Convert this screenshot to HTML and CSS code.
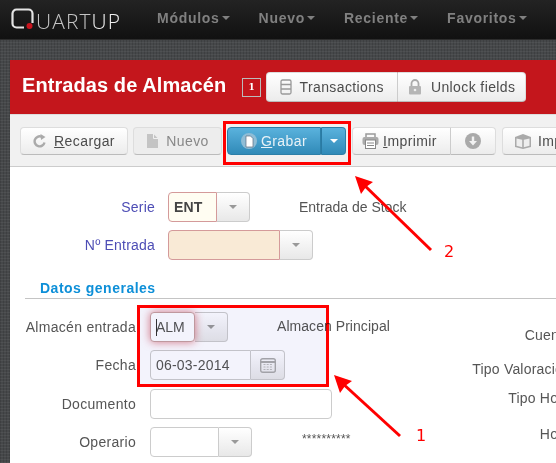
FILE: index.html
```html
<!DOCTYPE html>
<html lang="es">
<head>
<meta charset="utf-8">
<title>Entradas de Almacén</title>
<link rel="stylesheet" href="styles.css">
</head>
<body>
<nav class="navbar">
  <a class="brand">
    <svg class="brand-q" width="24" height="22" viewBox="0 0 24 22"><path d="M13 19.500H5.500A4 4 0 0 1 1.500 15.500V5.500A4 4 0 0 1 5.500 1.500h12A4 4 0 0 1 21.500 5.500V15" fill="none" stroke="#e4e4e4" stroke-width="2.200"/><circle cx="18.500" cy="18" r="3" fill="#c8141e"/></svg>
    <span class="brand-a">UART</span><span class="brand-b">UP</span>
  </a>
  <ul class="menu">
    <li>Módulos<i class="caret"></i></li>
    <li>Nuevo<i class="caret"></i></li>
    <li>Reciente<i class="caret"></i></li>
    <li>Favoritos<i class="caret"></i></li>
  </ul>
</nav>
<main class="page">
  <section class="panel">
    <header class="panel-head">
      <h1>Entradas de Almacén</h1>
      <span class="count">1</span>
      <div class="btn-group head-group">
        <button class="btn wide-t"><svg width="12" height="16" viewBox="0 0 12 16"><rect x="1" y="1" width="10" height="14" rx="1.500" fill="none" stroke="#999" stroke-width="1.300"/><path d="M1 5.500h10M1 10h10" stroke="#999" stroke-width="1.300"/></svg>Transactions</button>
        <button class="btn wide-u"><svg width="14" height="16" viewBox="0 0 14 16"><path d="M3.500 7V4.500a3.500 3.500 0 0 1 7 0V7" fill="none" stroke="#aaa" stroke-width="1.800"/><rect x="1" y="7" width="12" height="8.500" rx="1" fill="#b5b5b5"/><circle cx="7" cy="11" r="1.300" fill="#eee"/></svg>Unlock fields</button>
      </div>
    </header>
    <div class="toolbar">
      <button class="btn b-reload"><svg width="14" height="14" viewBox="0 0 14 14"><path d="M11.500 8.500A5 5 0 1 1 8.500 2.700" fill="none" stroke="#aaa" stroke-width="2.400"/><path d="M7.500 0l5 3-4.500 3z" fill="#aaa"/></svg><span><u>R</u>ecargar</span></button>
      <button class="btn b-new"><svg width="12" height="14" viewBox="0 0 12 14"><path d="M1 0h6.500L12 4.500V14H1z" fill="#c4c4c4"/><path d="M7.500 0v4.500H12" fill="none" stroke="#f0f0f0"/></svg>Nuevo</button>
      <div class="btn-group g-save">
        <button class="btn primary b-save"><svg width="16" height="16" viewBox="0 0 16 16"><circle cx="8" cy="8" r="8" fill="#8fbdd6"/><path d="M5 3h4.500L12 5.500V14H5z" fill="#fff" stroke="#5a6a80" stroke-width=".7"/></svg><span><u>G</u>rabar</span></button>
        <button class="btn primary b-drop"><i class="caret white"></i></button>
      </div>
      <div class="btn-group g-print">
        <button class="btn b-print"><svg width="17" height="16" viewBox="0 0 17 16"><path d="M4 4V1h9v3" fill="none" stroke="#999" stroke-width="1.500"/><rect x=".5" y="4" width="16" height="8" rx="2" fill="#aaa"/><rect x="3.500" y="7" width="10" height="8.500" fill="#fff" stroke="#888"/><path d="M5 10h7M5 12.500h7" stroke="#888"/></svg><span><u>I</u>mprimir</span></button>
        <button class="btn b-down"><svg width="16" height="16" viewBox="0 0 16 16"><circle cx="8" cy="8" r="8" fill="#aaa"/><path d="M6.800 3.500h2.400v4.500H12l-4 4.500-4-4.500h2.800z" fill="#f2f2f2"/></svg></button>
      </div>
      <button class="btn b-imp"><svg width="16" height="15" viewBox="0 0 16 15"><path d="M0 3l8-3 8 3v10l-8 2-8-2z" fill="#aaa"/><path d="M1.500 4.500l5.700 1.300v7.400l-5.700-1.400zM14.500 4.500l-5.700 1.300v7.400l5.700-1.400z" fill="#eee"/></svg><span>Importar</span></button>
    </div>
    <div class="form">
      <div class="head-fields">
        <div class="row r-serie">
          <label class="lbl req">Serie</label>
          <div class="combo c-serie"><span class="field yellow">ENT</span><span class="arrow"><i class="caret gray"></i></span></div>
          <span class="note n-serie">Entrada de Stock</span>
        </div>
        <div class="row r-entrada">
          <label class="lbl req">Nº Entrada</label>
          <div class="combo c-entrada"><span class="field peach"></span><span class="arrow"><i class="caret gray"></i></span></div>
        </div>
      </div>
      <h2 class="section">Datos generales</h2>
      <div class="details">
        <div class="left-col">
          <div class="row">
            <label class="lbl">Almacén entrada</label>
            <div class="combo c-alm"><span class="field focus"><b class="cursor"></b>ALM</span><span class="arrow"><i class="caret gray"></i></span></div>
            <span class="note n-alm">Almacen Principal</span>
          </div>
          <div class="row">
            <label class="lbl">Fecha</label>
            <div class="combo c-date"><span class="field">06-03-2014</span><span class="arrow"><svg width="16" height="16" viewBox="0 0 16 16"><rect x=".7" y="1.700" width="14.600" height="13.600" rx="2" fill="none" stroke="#aaa" stroke-width="1.400"/><path d="M1 5h14" stroke="#aaa" stroke-width="2"/><path d="M3.500 7.500h9M3.500 10h9M3.500 12.500h9" stroke="#bbb" stroke-dasharray="2 1.200"/></svg></span></div>
          </div>
          <div class="row">
            <label class="lbl">Documento</label>
            <div class="combo c-doc"><span class="field"></span></div>
          </div>
          <div class="row">
            <label class="lbl">Operario</label>
            <div class="combo c-oper"><span class="field"></span><span class="arrow"><i class="caret gray"></i></span></div>
            <span class="note n-oper">**********</span>
          </div>
        </div>
        <div class="right-col">
          <span class="rl rl1">Cuenta</span>
          <span class="rl rl2">Tipo Valoración</span>
          <span class="rl rl3">Tipo Hora</span>
          <span class="rl rl4">Hora</span>
        </div>
      </div>
    </div>
  </section>
</main>
<div class="mark mark-1"></div>
<div class="mark mark-2"></div>
<svg class="arrows" width="556" height="463" viewBox="0 0 556 463">
  <path d="M431 250L362 183" stroke="#f00" stroke-width="3"/>
  <path d="M355 176L373 182L366 187L361 194Z" fill="#f00"/>
  <path d="M400 436L341 382" stroke="#f00" stroke-width="3"/>
  <path d="M334 375L352 381L345 386L340 393Z" fill="#f00"/>
</svg>
<span class="num num-2">2</span>
<span class="num num-1">1</span>
</body>
</html>
```
FILE: styles.css
```css
* { box-sizing: border-box; }
html, body { margin: 0; height: 463px; width: 556px; overflow: hidden; }
body {
  font-family: "Liberation Sans", Arial, sans-serif;
  font-size: 14px;
  color: #555;
  background-color: #46484a;
  background-image:
    repeating-linear-gradient(0deg, rgba(255,255,255,.05) 0 1px, transparent 1px 3px),
    repeating-linear-gradient(90deg, rgba(0,0,0,.12) 0 1px, transparent 1px 3px);
  position: relative;
}
.navbar {
  height: 40px;
  display: flex;
  align-items: center;
  background: linear-gradient(#232323, #111);
  border-bottom: 1px solid #2c2c2c;
  padding-left: 11px;
}
.brand { display: flex; align-items: center; width: 134px; font-family: "Open Sans", sans-serif; font-size: 21px; line-height: 24px; font-weight: 300; height: 24px; flex: none; }
.brand-q { flex: none; margin-top: -2px; margin-right: 1px; }
.brand-a { color: #c4c4c4; letter-spacing: 1.1px; margin-top: 3px; }
.brand-b { color: #f0f0f0; letter-spacing: 1.1px; margin-top: 3px; }
.menu { display: flex; margin: 0; padding: 0; list-style: none; gap: 29px; font-weight: bold; font-size: 14px; letter-spacing: .72px; color: #808080; margin-left: 12px; margin-top: -4px; }
.menu li { display: flex; align-items: center; }
.caret { display: inline-block; width: 0; height: 0; border: 4px solid transparent; border-top-color: #808080; border-bottom: 0; margin-left: 2px; }
.caret.white { border-top-color: #fff; margin: 0; }
.caret.gray { border-top-color: #999; margin: 0; }

.page { padding: 20px 0 0 10px; }
.panel { width: 600px; min-height: 420px; background: #fff; }
.panel-head {
  height: 55px;
  background: #c4161c;
  border-bottom: 1px solid #ddd;
  display: flex;
  align-items: center;
  padding-left: 12px;
}
h1 { margin: 0; font-size: 20px; line-height: 28px; color: #fff; font-weight: bold; letter-spacing: .08px; white-space: nowrap; margin-top: -5px; }
.count {
  width: 19px; height: 19px; border: 1px solid #bbb; margin-left: 16px; margin-right: 5px;
  color: #fff; font: bold 9px/17px "DejaVu Serif", serif; text-align: center; margin-top: 0;
}
.btn-group { display: flex; }
.btn {
  display: flex; align-items: center; justify-content: center; gap: 7px;
  height: 100%; padding: 0; margin: 0;
  font: 14px "Liberation Sans", Arial, sans-serif;
  letter-spacing: .4px;
  color: #4c4c4c;
  background: linear-gradient(#fff, #ececec);
  border: 1px solid #ddd;
  border-bottom-color: #bbb;
  border-radius: 4px;
}
.head-group { height: 30px; margin-top: 0; }
.wide-t { width: 131px; border-radius: 4px 0 0 4px; border-right: 0; }
.wide-u { width: 129px; border-radius: 0 4px 4px 0; border-left: 1px solid #ccc; gap: 9px; }
.toolbar {
  height: 52px;
  background: #f1f1f1;
  border-bottom: 1px solid #ccc;
  display: flex;
  align-items: center;
  padding: 0 0 0 10px;
  margin-top: 0;
}
.toolbar > * { height: 28px; flex: none; margin-top: 1px; }
.b-reload { width: 108px; }
.b-new { width: 89px; margin-left: 5px; color: #888; background: #ededed; gap: 8px; }
.g-save { margin-left: 5px; }
.primary { background: linear-gradient(#5ab2dd, #308ab8); border: 1px solid #2c7fa8; color: #e8f2f7; }
.b-save { width: 94px; border-radius: 4px 0 0 4px; gap: 4px; }
.b-drop { width: 25px; border-radius: 0 4px 4px 0; border-left: 1px solid #2a7aa3; }
.g-print { margin-left: 6px; }
.b-print { width: 99px; padding-right: 4px; border-radius: 4px 0 0 4px; border-right: 1px solid #ccc; gap: 4px; }
.b-down { width: 45px; border-radius: 0 4px 4px 0; border-left: 0; }
.b-imp { width: 100px; margin-left: 6px; justify-content: flex-start; padding-left: 12px; }

.form { padding: 25px 0 0 15px; }
.row { display: flex; align-items: center; height: 30px; }
.head-fields { display: flex; flex-direction: column; gap: 8px; }
.lbl { text-align: right; white-space: nowrap; letter-spacing: .3px; }
.req { color: #4d4db5; width: 130px; margin-right: 13px; letter-spacing: .2px; }
.combo { display: flex; height: 30px; flex: none; }
.field {
  display: flex; align-items: center; padding-left: 5px; flex: 1;
  border: 1px solid #ccc; border-radius: 4px 0 0 4px;
  background: #fff; font-size: 14px; letter-spacing: .2px; color: #555;
}
.yellow { background: #fffdf2; border-color: #d49a9a; font-weight: bold; color: #444; }
.peach { background: #f9ead6; border-color: #d49a9a; }
.arrow {
  width: 33px; display: flex; align-items: center; justify-content: center;
  background: linear-gradient(#fff, #e8e8e8);
  border: 1px solid #ccc; border-left: 0; border-radius: 0 4px 4px 0;
}
.c-serie { width: 82px; }
.c-serie .arrow { width: 33px; }
.c-entrada { width: 145px; }
.c-alm { width: 78px; }
.c-date { width: 135px; }
.c-date .arrow { width: 34px; }
.c-doc { width: 182px; }
.c-doc .field { border-radius: 4px; }
.c-oper { width: 102px; }
.note { white-space: nowrap; }
.n-serie { margin-left: 49px; }
.n-alm { margin-left: 49px; margin-top: -2px; letter-spacing: .05px; }
.n-oper { margin-left: 50px; font-size: 12px; letter-spacing: .2px; margin-top: -6px; }
.section {
  margin: 15px 0 13px;
  padding-top: 3px;
  height: 24px;
  font-size: 14px; line-height: 20px;
  letter-spacing: .5px;
  color: #0d8fd8;
  border-bottom: 1px solid #c4c4c4;
  text-indent: 15px;
}
.details { display: flex; width: 546px; }
.left-col { display: flex; flex-direction: column; gap: 8px; flex: none; }
.left-col .row:nth-child(3) { margin-top: 1px; }
.left-col .lbl { width: 111px; margin-right: 14px; }
.right-col { flex: 1; position: relative; display: flex; flex-direction: column; align-items: flex-end; padding-top: 15px; }
.rl { white-space: nowrap; line-height: 16px; letter-spacing: .2px; }
.rl2 { margin-top: 18px; }
.rl3 { margin-top: 13px; }
.rl4 { margin-top: 20px; }

.focus { position: relative; border-radius: 4px; background: #fff; border-color: #c9a0a0; box-shadow: 0 0 9px rgba(200,40,60,.6); z-index: 1; letter-spacing: 0; }
.cursor { position: absolute; left: 5px; top: 6px; width: 1px; height: 17px; background: #333; }

.mark { position: absolute; border: 3px solid #f00; z-index: 2; }
.mark-1 { left: 137px; top: 305px; width: 192px; height: 82px; background: rgba(214,214,246,.3); mix-blend-mode: multiply; }
.mark-2 { left: 223px; top: 121px; width: 128px; height: 44px; }
.arrows { position: absolute; left: 0; top: 0; pointer-events: none; z-index: 3; }
.num { position: absolute; color: #f00; font: 16px/20px "DejaVu Sans", sans-serif; z-index: 3; }
.num-2 { left: 444px; top: 242px; }
.num-1 { left: 416px; top: 426px; }
```
